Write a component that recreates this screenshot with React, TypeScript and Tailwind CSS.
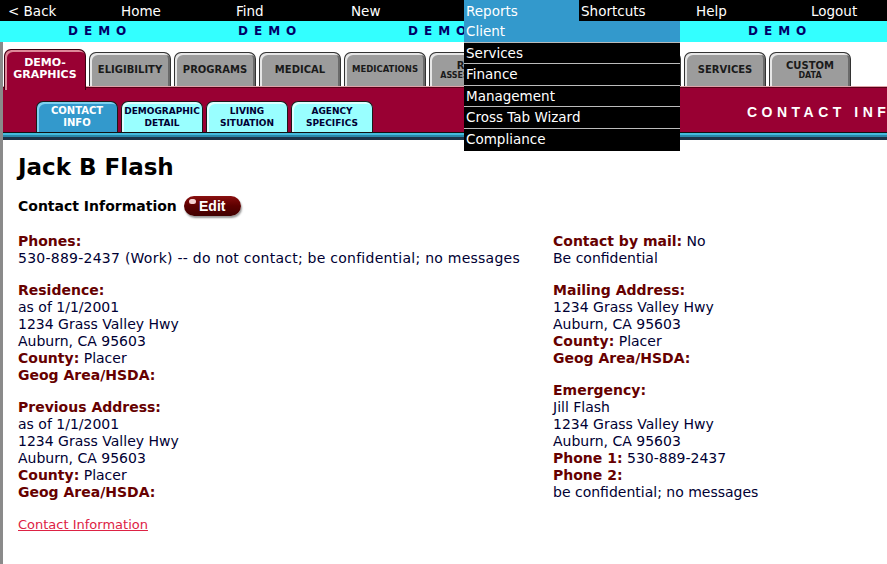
import React from "react";

const navItems = ["< Back", "Home", "Find", "New", "Reports", "Shortcuts", "Help", "Logout"];
const dropItems = ["Client", "Services", "Finance", "Management", "Cross Tab Wizard", "Compliance"];

function Tab({ top, bottom, size }: { top: string; bottom?: string; size?: string }) {
  return (
    <div className="w-[82px] h-[34px] shrink-0 rounded-t-[7px] border border-[#333] border-b-0 bg-[#9c9c9c] shadow-[inset_2px_2px_0_#e6e6e6,inset_-2px_0_0_#6a6a6a] flex flex-col items-center justify-center leading-[11px] text-[#1a1a1a] font-bold whitespace-nowrap overflow-hidden">
      <span className={size ?? "text-[10px]"}>{top}</span>
      {bottom && <span className="text-[8px] leading-[9px]">{bottom}</span>}
    </div>
  );
}

function SubTab({ a, b, active }: { a: string; b: string; active?: boolean }) {
  return (
    <div
      className={
        "w-[82px] h-[31px] shrink-0 rounded-t-[7px] border border-[#1a1a1a] border-b-0 flex flex-col items-center justify-center text-[9px] leading-[12px] font-bold whitespace-nowrap overflow-hidden " +
        (active
          ? "bg-[#3399cc] text-white shadow-[inset_2px_2px_0_#7fd0f0] text-[10px]"
          : "bg-[#99ffff] text-[#000033] shadow-[inset_2px_2px_0_#e0ffff]")
      }
    >
      <span>{a}</span>
      <span>{b}</span>
    </div>
  );
}

function Label({ children }: { children: React.ReactNode }) {
  return <span className="font-bold text-[#660000]">{children}</span>;
}

export default function App() {
  return (
    <div
      className="relative w-[887px] h-[564px] overflow-hidden bg-white text-[#000033]"
      style={{ fontFamily: '"DejaVu Sans", Verdana, sans-serif' }}
    >
      {/* top nav */}
      <div className="flex h-[21px] bg-black pl-[4px] text-[13.5px] leading-[22px] text-white">
        {navItems.map((n, i) => (
          <div
            key={n}
            className={
              "w-[115px] shrink-0 " +
              (i === 0 ? "pl-[4px]" : "pl-[2px]") +
              (n === "Reports" ? " bg-[#3399cc]" : "")
            }
          >
            {n}
          </div>
        ))}
      </div>

      {/* demo strip */}
      <div className="flex h-[21px] bg-[#33ffff] pl-[68px] text-[12px] leading-[21px] font-bold text-[#000066]">
        {[0, 1, 2, 3, 4].map((i) => (
          <div key={i} className="w-[170px] shrink-0 tracking-[6px]">DEMO</div>
        ))}
      </div>

      <div className="border-l-[3px] border-[#8a8a8a] h-[522px]">
        {/* tabs */}
        <div className="flex items-end gap-[3px] pl-[1px] pt-[5px] h-[44px] relative z-10">
          <div className="w-[82px] h-[41px] shrink-0 self-start rounded-t-[7px] border border-[#3a0010] border-b-0 bg-[#990033] shadow-[inset_2px_2px_0_#dd8899] flex flex-col items-center pt-[7px] text-[11px] leading-[12px] font-bold text-white translate-y-[2px]">
            <span>DEMO-</span>
            <span>GRAPHICS</span>
          </div>
          <div className="flex gap-[3px] items-end h-[34px]">
            <Tab top="ELIGIBILITY" />
            <Tab top="PROGRAMS" />
            <Tab top="MEDICAL" />
            <Tab top="MEDICATIONS" size="text-[8.5px]" />
            <Tab top="RISK" bottom="ASSESSMENT" />
            <Tab top="PLANS" />
            <Tab top="NOTES" />
            <Tab top="SERVICES" />
            <Tab top="CUSTOM" bottom="DATA" />
          </div>
        </div>

        {/* maroon panel */}
        <div className="h-[46px] bg-[#990033] border-t-[1px] border-[#e0a0a8] shadow-[inset_0_1px_0_#5a0018] flex items-end pl-[33px] gap-[3px] relative">
          <SubTab a="CONTACT" b="INFO" active />
          <SubTab a="DEMOGRAPHIC" b="DETAIL" />
          <SubTab a="LIVING" b="SITUATION" />
          <SubTab a="AGENCY" b="SPECIFICS" />
          <div
            className="absolute left-[744px] top-[15px] w-[140px] overflow-hidden whitespace-nowrap text-[14px] font-bold tracking-[4.5px] text-white"
            style={{ fontFamily: '"Liberation Sans", Arial, sans-serif' }}
          >
            CONTACT INF
          </div>
        </div>
        <div className="h-[1px] bg-[#111]" />
        <div className="h-[2px] bg-[#44bbdd]" />
        <div className="h-[2px] bg-[#2a88aa]" />
        <div className="h-[3px] bg-[#1c3348]" />

        {/* content */}
        <div className="pl-[15px] pt-[13px] text-[14px] leading-[17px]">
          <h1 className="text-[23px] leading-[28px] font-bold text-black">Jack B Flash</h1>
          <div className="flex items-center mt-[14px] h-[22px]">
            <span className="text-[14px] font-bold text-black">Contact Information</span>
            <span
              className="relative ml-[7px] inline-flex items-center justify-center w-[57px] h-[20px] rounded-full bg-gradient-to-b from-[#8a1010] via-[#5c0000] to-[#400000] text-white text-[14px] font-bold shadow-[1px_2px_2px_#999]"
              style={{ fontFamily: '"Liberation Sans", Arial, sans-serif' }}
            >
              <span className="absolute left-[5px] top-[3px] w-[7px] h-[5px] rounded-full bg-[#f4d0d0]" />
              Edit
            </span>
          </div>

          <div className="grid grid-cols-[535px_1fr] mt-[16px]">
            <div>
              <div>
                <div><Label>Phones:</Label></div>
                <div className="tracking-[0.25px]">530-889-2437 (Work) -- do not contact; be confidential; no messages</div>
              </div>
              <div className="mt-[15px]">
                <div><Label>Residence:</Label></div>
                <div>as of 1/1/2001</div>
                <div>1234 Grass Valley Hwy</div>
                <div>Auburn, CA 95603</div>
                <div><Label>County:</Label> Placer</div>
                <div><Label>Geog Area/HSDA:</Label></div>
              </div>
              <div className="mt-[15px]">
                <div><Label>Previous Address:</Label></div>
                <div>as of 1/1/2001</div>
                <div>1234 Grass Valley Hwy</div>
                <div>Auburn, CA 95603</div>
                <div><Label>County:</Label> Placer</div>
                <div><Label>Geog Area/HSDA:</Label></div>
              </div>
              <div className="mt-[15px] text-[13px]">
                <a href="#" className="text-[#dd2244] underline">Contact Information</a>
              </div>
            </div>
            <div>
              <div>
                <div><Label>Contact by mail:</Label> No</div>
                <div>Be confidential</div>
              </div>
              <div className="mt-[15px]">
                <div><Label>Mailing Address:</Label></div>
                <div>1234 Grass Valley Hwy</div>
                <div>Auburn, CA 95603</div>
                <div><Label>County:</Label> Placer</div>
                <div><Label>Geog Area/HSDA:</Label></div>
              </div>
              <div className="mt-[15px]">
                <div><Label>Emergency:</Label></div>
                <div>Jill Flash</div>
                <div>1234 Grass Valley Hwy</div>
                <div>Auburn, CA 95603</div>
                <div><Label>Phone 1:</Label> 530-889-2437</div>
                <div><Label>Phone 2:</Label></div>
                <div>be confidential; no messages</div>
              </div>
            </div>
          </div>
        </div>
      </div>

      {/* dropdown */}
      <div className="absolute left-[464px] top-[21px] w-[216px] bg-black text-[13.5px] text-white z-20">
        {dropItems.map((d, i) => (
          <div
            key={d}
            className={
              "h-[21.6px] leading-[20px] pl-[2px] " +
              (i < dropItems.length - 1 ? "border-b border-[#bbbbbb] " : "") +
              (i === 0 ? "bg-[#3399cc]" : "")
            }
          >
            {d}
          </div>
        ))}
      </div>
    </div>
  );
}
